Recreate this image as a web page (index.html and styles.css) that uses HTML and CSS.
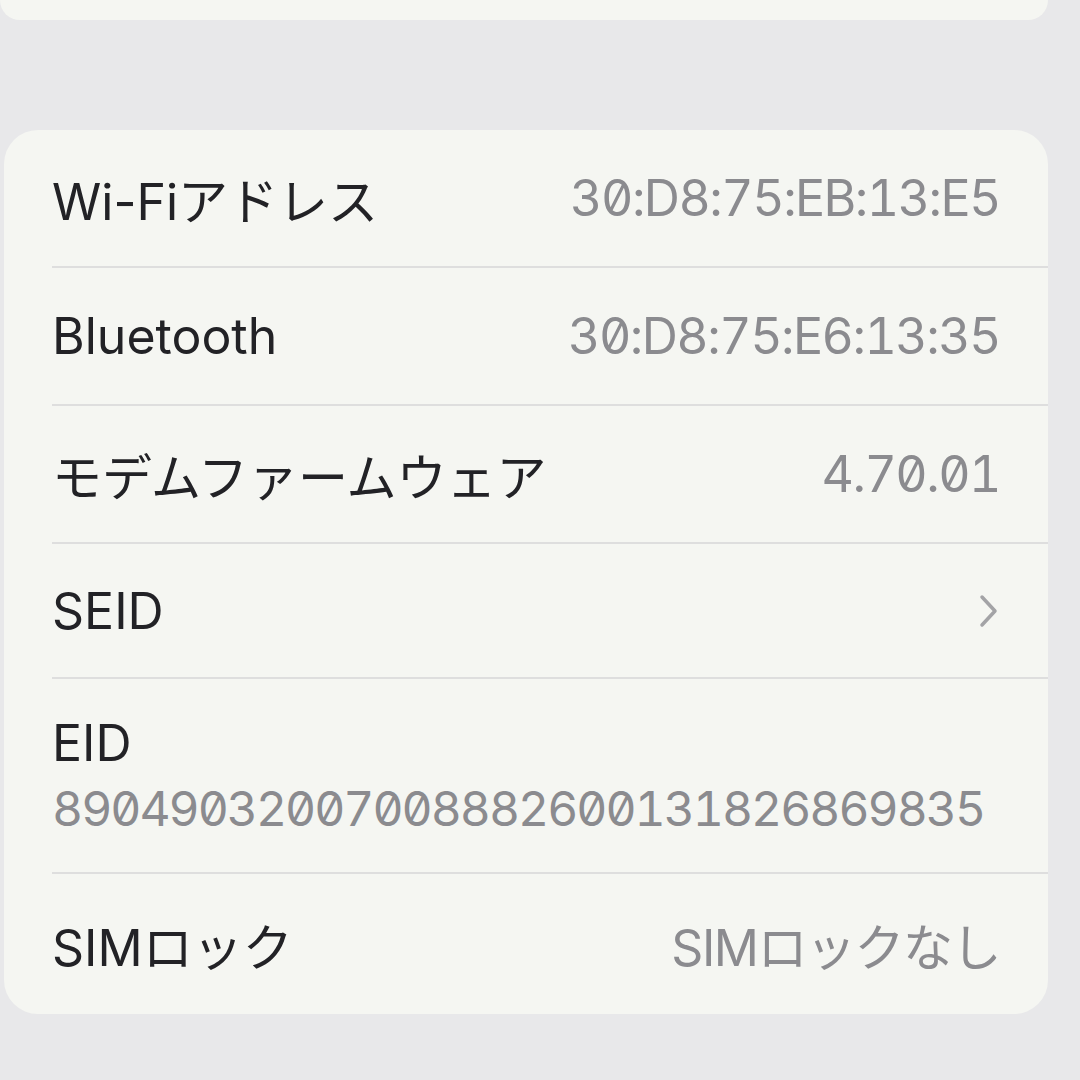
FILE: index.html
```html
<!DOCTYPE html>
<html lang="ja">
<head>
    <meta charset="utf-8">
    <title>情報</title>
    <link rel="stylesheet" href="styles.css">
</head>
<body>
    <div class="card card-top"></div>

    <div class="card list">
        <div class="row">
            <span class="label">Wi-Fiアドレス</span>
            <span class="value">30:D8:75:EB:13:E5</span>
        </div>
        <div class="row">
            <span class="label">Bluetooth</span>
            <span class="value">30:D8:75:E6:13:35</span>
        </div>
        <div class="row">
            <span class="label">モデムファームウェア</span>
            <span class="value">4.70.01</span>
        </div>
        <div class="row short">
            <span class="label">SEID</span>
            <svg class="chevron" width="22" height="36" viewBox="0 0 22 36">
                <path d="M4 4 L17 18 L4 32" fill="none" stroke="#a3a3a6" stroke-width="3.5" stroke-linecap="round" stroke-linejoin="round"/>
            </svg>
        </div>
        <div class="row stacked">
            <span class="label">EID</span>
            <span class="value">89049032007008882600131826869835</span>
        </div>
        <div class="row last">
            <span class="label">SIMロック</span>
            <span class="value">SIMロックなし</span>
        </div>
    </div>
</body>
</html>
```

FILE: styles.css
```css
body {
    margin: 0;
    width: 1080px;
    height: 1080px;
    overflow: hidden;
    background-color: #e8e8ea;
    font-family: Inter, "Noto Sans CJK JP", sans-serif;
}

.card {
    background-color: #f5f6f2;
    border-radius: 34px;
    margin-right: 32px;
}

.card-top {
    height: 20px;
    border-radius: 0 0 34px 34px;
}

.list {
    margin-top: 110px;
    margin-left: 4px;
    padding-left: 48px;
}

.row {
    display: flex;
    align-items: center;
    justify-content: space-between;
    height: 138px;
    padding-right: 48px;
    border-bottom: 2px solid #dedede;
    box-sizing: border-box;
}

.row.short {
    height: 135px;
}

.row.stacked {
    flex-direction: column;
    align-items: flex-start;
    justify-content: center;
    height: 195px;
    gap: 6px;
}

.row.last {
    height: 140px;
    border-bottom: none;
}

.label {
    font-size: 50px;
    color: #222226;
}

.value {
    font-size: 50px;
    color: #8b8b8f;
    font-feature-settings: "tnum", "zero";
    letter-spacing: -1.5px;
}

.stacked .value {
    font-size: 48px;
    letter-spacing: -2px;
}
```
